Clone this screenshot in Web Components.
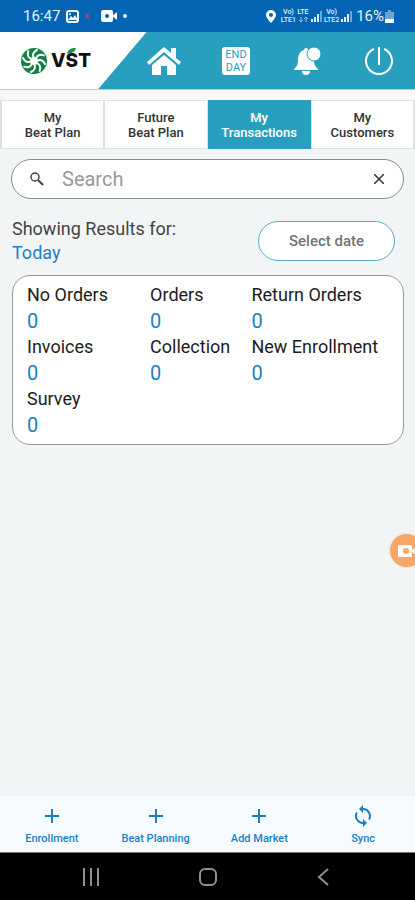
<!DOCTYPE html>
<html lang="en">
<head>
<meta charset="UTF-8">
<meta name="viewport" content="width=device-width, initial-scale=1">
<title>My Transactions</title>
<style>
    body {
        margin: 0;
        font-family: Roboto, "Liberation Sans", sans-serif;
        background: #f2f5f5;
        --teal: #289fbf;
        --blue: #1b7fc4;
    }
</style>
</head>
<body>
<vst-app>
    <status-bar slot="top"></status-bar>
    <app-header slot="top"></app-header>
    <tab-bar slot="top">
        <tab-item>My<br>Beat Plan</tab-item>
        <tab-item>Future<br>Beat Plan</tab-item>
        <tab-item active>My<br>Transactions</tab-item>
        <tab-item>My<br>Customers</tab-item>
    </tab-bar>
    <search-box></search-box>
    <results-filter>Today</results-filter>
    <summary-card>
        <stat-item label="No Orders">0</stat-item>
        <stat-item label="Orders">0</stat-item>
        <stat-item label="Return Orders">0</stat-item>
        <stat-item label="Invoices">0</stat-item>
        <stat-item label="Collection">0</stat-item>
        <stat-item label="New Enrollment">0</stat-item>
        <stat-item label="Survey">0</stat-item>
    </summary-card>
    <record-button slot="float"></record-button>
    <bottom-nav slot="bottom">
        <nav-action icon="plus">Enrollment</nav-action>
        <nav-action icon="plus">Beat Planning</nav-action>
        <nav-action icon="plus">Add Market</nav-action>
        <nav-action icon="sync">Sync</nav-action>
    </bottom-nav>
    <system-nav slot="bottom"></system-nav>
</vst-app>

<script>
class BaseComponent extends HTMLElement {
    constructor() {
        super();
        this.attachShadow({ mode: 'open' });
    }

    connectedCallback() {
        this.shadowRoot.innerHTML = `
            <style>
                * { box-sizing: border-box; }
                button {
                    font: inherit;
                    color: inherit;
                    background: none;
                    border: 0;
                    padding: 0;
                    margin: 0;
                    cursor: pointer;
                }
                svg { display: block; }
            </style>
            ${this.render()}
        `;
    }
}

class VstApp extends BaseComponent {
    render() {
        return `
            <style>
                :host {
                    display: flex;
                    flex-direction: column;
                    min-height: 100vh;
                    position: relative;
                    overflow: hidden;
                }
                main {
                    flex: 1;
                    padding: 10px 11px 16px;
                }
            </style>
            <slot name="top"></slot>
            <main><slot></slot></main>
            <slot name="float"></slot>
            <slot name="bottom"></slot>
        `;
    }
}

class StatusBar extends BaseComponent {
    render() {
        return `
            <style>
                :host {
                    display: flex;
                    align-items: center;
                    justify-content: space-between;
                    height: 32px;
                    padding: 0 21px 0 23px;
                    background: #0264b3;
                    color: #e6f1fa;
                    font-size: 15px;
                }
                div { display: flex; align-items: center; }
                .left { gap: 6px; }
                .right { gap: 1px; }
                .dot { width: 4px; height: 4px; border-radius: 50%; background: #fff; }
                .red { background: #b0446c; }
                .net {
                    display: grid;
                    font-size: 7px;
                    font-weight: 500;
                    line-height: 8px;
                    text-align: center;
                }
            </style>
            <div class="left">
                <span>16:47</span>
                <svg width="13" height="13" viewBox="0 0 13 13">
                    <rect x="1" y="1" width="11" height="11" rx="2" fill="none" stroke="#fff" stroke-width="2"/>
                    <path d="M2 10l3-4 2 2 2-3 3 5z" fill="#fff"/>
                    <circle cx="4" cy="4" r="1" fill="#fff"/>
                </svg>
                <span class="dot red"></span>
                <svg width="22" height="12" viewBox="-6 0 22 12">
                    <rect width="12" height="12" rx="2" fill="#fff"/>
                    <path d="M11 6l5-4v8z" fill="#fff"/>
                    <circle cx="6" cy="6" r="2" fill="#0264b3"/>
                </svg>
                <span class="dot"></span>
            </div>
            <div class="right">
                <svg width="14" height="13" viewBox="0 0 14 13">
                    <path fill="#fff" fill-rule="evenodd" d="M5 0a5 5 0 0 1 5 5c0 3-5 8-5 8S0 8 0 5a5 5 0 0 1 5-5zm0 3a2 2 0 1 0 0 4 2 2 0 0 0 0-4z"/>
                </svg>
                <span class="net"><span>Vo)</span><span>LTE1</span></span>
                <span class="net"><span>LTE</span><svg width="12" height="8" viewBox="0 0 12 8" fill="none" stroke="#8fbde2"><path d="M4 1v5M2 4l2 2 2-2M9 6V1M7 3l2-2 2 2"/></svg></span>
                <svg width="13" height="12" viewBox="0 0 13 12">
                    <path d="M1 9h2v3H1zM4 7h2v5H4zM7 4h2v8H7z" fill="#e6f1fa"/>
                    <path d="M10 1h2v11h-2z" fill="#6ba5d4"/>
                </svg>
                <span class="net"><span>Vo)</span><span>LTE2</span></span>
                <svg width="15" height="12" viewBox="0 0 15 12">
                    <path d="M1 9h2v3H1zM4 7h2v5H4zM7 4h2v8H7z" fill="#e6f1fa"/>
                    <path d="M10 1h2v11h-2z" fill="#6ba5d4"/>
                </svg>
                <span>16%</span>
                <svg width="9" height="13" viewBox="0 0 9 13">
                    <path d="M3 0h3v2h3v7H0V2h3z" fill="#6ba5d4"/>
                    <path d="M0 9h9v4H0z" fill="#fff"/>
                </svg>
            </div>
        `;
    }
}

class AppHeader extends BaseComponent {
    render() {
        const blades = [0, 45, 90, 135, 180, 225, 270, 315]
            .map((a) => `<path d="M14 11C12 8 13 5 17 3" transform="rotate(${a} 14 14)"/>`)
            .join('');
        return `
            <style>
                :host {
                    display: grid;
                    grid-template-columns: 31% repeat(4, 1fr);
                    height: 57px;
                    background: var(--teal);
                    border-bottom: 1px solid #b9cdd3;
                    color: #fff;
                }
                .logo {
                    display: flex;
                    align-items: center;
                    gap: 3px;
                    margin-right: -18px;
                    padding: 0 0 0 20px;
                    background: #fff;
                    clip-path: polygon(0 0, 100% 0, 67% 100%, 0 100%);
                }
                .name {
                    position: relative;
                    color: #111;
                    font: 800 19px/24px Inter, "Liberation Sans", sans-serif;
                }
                .leaf { position: absolute; left: 16px; top: -1px; }
                button { display: grid; place-items: center; }
                .day {
                    width: 28px;
                    padding: 1px 0;
                    border-radius: 3px;
                    background: #fff;
                    color: var(--teal);
                    font-size: 11px;
                    line-height: 13px;
                }
            </style>
            <div class="logo">
                <svg width="28" height="28" viewBox="0 0 28 28">
                    <circle cx="14" cy="14" r="13" fill="#138045"/>
                    <g fill="none" stroke="#fff" stroke-width="2" stroke-linecap="round">${blades}</g>
                    <circle cx="14" cy="14" r="4" fill="#fff"/>
                </svg>
                <span class="name">VST
                    <svg class="leaf" width="9" height="6" viewBox="0 0 9 6"><path d="M0 6C1 1 4 0 9 0 8 4 5 5 0 6z" fill="#139447"/></svg>
                </span>
            </div>
            <button aria-label="Home">
                <svg width="34" height="28" viewBox="0 0 34 28" fill="#fff">
                    <path d="M17 0l7 6V1h5v10l5 4-2 3L17 5 2 18l-2-3z"/>
                    <path d="M17 8l12 10v10h-9v-9h-6v9H5V18z"/>
                </svg>
            </button>
            <button><span class="day">END<br>DAY</span></button>
            <button aria-label="Notifications">
                <svg width="28" height="28" viewBox="0 0 28 28">
                    <path fill="#fff" d="M12 1a2 2 0 0 0-2 2C6 4 4 8 4 13c0 5-1 6-4 9v1h24v-1c-3-3-4-4-4-9C20 8 18 4 14 3a2 2 0 0 0-2-2z"/>
                    <path fill="#fff" d="M8 24h8a4 4 0 0 1-8 0z"/>
                    <circle cx="20" cy="7" r="7" fill="#fff" stroke="#289fbf"/>
                </svg>
            </button>
            <button aria-label="Power">
                <svg width="28" height="28" viewBox="0 0 28 28" fill="none" stroke="#fff" stroke-width="2">
                    <path d="M9 2a13 13 0 1 0 10 0M14 0v18"/>
                </svg>
            </button>
        `;
    }
}

class TabBar extends BaseComponent {
    render() {
        return `
            <style>
                :host {
                    display: grid;
                    grid-template-columns: repeat(4, 1fr);
                    gap: 2px;
                    margin-top: 10px;
                    padding: 1px 2px;
                    background: #dfe1e2;
                    box-shadow: 0 -10px #f7f9f9;
                }
            </style>
            <slot></slot>
        `;
    }
}

class TabItem extends BaseComponent {
    render() {
        return `
            <style>
                :host { display: grid; background: #fff; color: #333; }
                :host([active]) { background: var(--teal); color: #fff; margin: -1px; }
                button {
                    min-height: 47px;
                    font-size: 13px;
                    font-weight: 500;
                    line-height: 15px;
                }
            </style>
            <button><slot></slot></button>
        `;
    }
}

class SearchBox extends BaseComponent {
    render() {
        return `
            <style>
                :host {
                    display: flex;
                    align-items: center;
                    height: 40px;
                    padding: 0 19px 0 18px;
                    background: #fff;
                    border: 1px solid #8b8b8b;
                    border-radius: 20px;
                    box-sizing: border-box;
                }
                input {
                    flex: 1;
                    min-width: 0;
                    border: 0;
                    outline: 0;
                    padding: 0 0 0 18px;
                    background: none;
                    color: #333;
                    font: 20px/24px Roboto, "Liberation Sans", sans-serif;
                }
                input::placeholder { color: #999; opacity: 1; }
            </style>
            <svg width="14" height="14" viewBox="0 0 14 14" fill="none" stroke="#444">
                <circle cx="5" cy="5" r="4" stroke-width="1.500"/><path d="M8 8l5 5" stroke-width="2"/>
            </svg>
            <input type="text" aria-label="Search" placeholder="Search">
            <button aria-label="Clear">
                <svg width="10" height="10" viewBox="0 0 10 10" fill="none" stroke="#333" stroke-width="1.500">
                    <path d="M0 0l10 10M10 0L0 10"/>
                </svg>
            </button>
        `;
    }
}

class ResultsFilter extends BaseComponent {
    render() {
        return `
            <style>
                :host {
                    display: flex;
                    justify-content: space-between;
                    align-items: center;
                    margin: 18px 9px 10px 1px;
                }
                p {
                    margin: 0;
                    color: #444;
                    font-size: 18px;
                    line-height: 24px;
                }
                .value { color: var(--blue); }
                button {
                    width: 137px;
                    height: 40px;
                    border: 1px solid #55aec6;
                    border-radius: 20px;
                    background: #fff;
                    color: #737373;
                    font-size: 15px;
                    font-weight: 500;
                }
            </style>
            <div>
                <p>Showing Results for:</p>
                <p class="value"><slot></slot></p>
            </div>
            <button>Select date</button>
        `;
    }
}

class SummaryCard extends BaseComponent {
    render() {
        return `
            <style>
                :host {
                    display: grid;
                    grid-template-columns: 34% 28% 1fr;
                    margin-left: 1px;
                    padding: 6px 14px;
                    background: #fff;
                    border: 1px solid #999;
                    border-radius: 18px;
                }
            </style>
            <slot></slot>
        `;
    }
}

class StatItem extends BaseComponent {
    render() {
        return `
            <style>
                :host { display: block; white-space: nowrap; }
                .label { font-size: 18px; line-height: 26px; color: #1c1c1c; }
                .value { font-size: 20px; line-height: 26px; color: var(--blue); }
            </style>
            <div class="label">${this.getAttribute('label')}</div>
            <div class="value"><slot></slot></div>
        `;
    }
}

class RecordButton extends BaseComponent {
    render() {
        return `
            <style>
                /* floats over the page, half past the right edge */
                :host { position: absolute; right: -8px; top: 534px; }
                button {
                    display: grid;
                    place-items: center;
                    width: 33px;
                    height: 33px;
                    border-radius: 50%;
                    background: #f9a765;
                    box-shadow: 0 0 3px #e0d8d0;
                }
            </style>
            <button aria-label="Record">
                <svg width="18" height="12" viewBox="0 0 18 12">
                    <rect width="14" height="12" rx="1" fill="#fff"/>
                    <path d="M13 6l5-4v8z" fill="#fff"/>
                    <circle cx="8" cy="6" r="3" fill="#f9a765"/>
                </svg>
            </button>
        `;
    }
}

class BottomNav extends BaseComponent {
    render() {
        return `
            <style>
                :host {
                    display: grid;
                    grid-template-columns: repeat(4, 1fr);
                    background: #f5faff;
                }
            </style>
            <slot></slot>
        `;
    }
}

class NavAction extends BaseComponent {
    render() {
        const icons = {
            plus: '<path d="M12 5v14M5 12h14" fill="none" stroke="currentColor" stroke-width="2"/>',
            sync: '<path fill="currentColor" d="M12 4V1L8 5l4 4V6a6 6 0 0 1 5.300 8.800l1.460 1.460A8 8 0 0 0 12 4zm0 14a6 6 0 0 1-5.300-8.800L5.240 7.740A8 8 0 0 0 12 20v3l4-4-4-4z"/>'
        };
        return `
            <style>
                :host { display: grid; color: var(--blue); }
                button {
                    display: flex;
                    flex-direction: column;
                    align-items: center;
                    gap: 4px;
                    padding: 8px 0 7px;
                    font-size: 11px;
                    font-weight: 500;
                    line-height: 13px;
                }
            </style>
            <button>
                <svg width="24" height="24" viewBox="0 0 24 24">${icons[this.getAttribute('icon')]}</svg>
                <span><slot></slot></span>
            </button>
        `;
    }
}

class SystemNav extends BaseComponent {
    render() {
        return `
            <style>
                :host {
                    display: grid;
                    grid-template-columns: repeat(3, 28%);
                    justify-content: center;
                    height: 48px;
                    background: #000;
                    border-top: 1px solid #777;
                    box-sizing: border-box;
                }
                button { display: grid; place-items: center; }
                svg { fill: none; stroke: #8f8f8f; stroke-width: 2; }
            </style>
            <button aria-label="Recent apps">
                <svg width="18" height="18" viewBox="0 0 18 18"><path d="M2 0v18M9 0v18M16 0v18"/></svg>
            </button>
            <button aria-label="Home">
                <svg width="18" height="18" viewBox="0 0 18 18"><rect x="1" y="1" width="16" height="16" rx="5"/></svg>
            </button>
            <button aria-label="Back">
                <svg width="18" height="18" viewBox="0 0 18 18"><path d="M13 1L4 9l9 8"/></svg>
            </button>
        `;
    }
}

customElements.define('vst-app', VstApp);
customElements.define('status-bar', StatusBar);
customElements.define('app-header', AppHeader);
customElements.define('tab-bar', TabBar);
customElements.define('tab-item', TabItem);
customElements.define('search-box', SearchBox);
customElements.define('results-filter', ResultsFilter);
customElements.define('summary-card', SummaryCard);
customElements.define('stat-item', StatItem);
customElements.define('record-button', RecordButton);
customElements.define('bottom-nav', BottomNav);
customElements.define('nav-action', NavAction);
customElements.define('system-nav', SystemNav);
</script>
</body>
</html>
